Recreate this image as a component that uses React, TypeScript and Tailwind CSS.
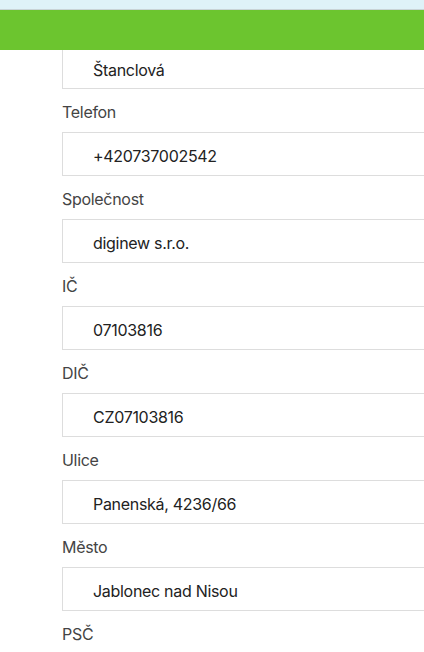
import React from "react";

const fields: { label: string; value: string }[] = [
  { label: "Telefon", value: "+420737002542" },
  { label: "Společnost", value: "diginew s.r.o." },
  { label: "IČ", value: "07103816" },
  { label: "DIČ", value: "CZ07103816" },
  { label: "Ulice", value: "Panenská, 4236/66" },
  { label: "Město", value: "Jablonec nad Nisou" },
];

export default function App() {
  return (
    <div
      className="w-[424px] h-[652px] overflow-hidden bg-white relative tracking-[-0.3px]"
      style={{ fontFamily: "Inter, 'Liberation Sans', sans-serif" }}
    >
      <div className="h-[10px] bg-[#dff2f8] border-b border-[#c9d3d6]" />
      <div className="h-[40px] bg-[#6cc52f]" />
      <div className="pl-[62px] -mr-[40px]">
        <div className="h-[39px] border-l border-b border-[#dddddd] flex items-center pl-[30px] pt-[1px] text-[16px] text-[#222]">
          Štanclová
        </div>
        {fields.map((f) => (
          <div key={f.label}>
            <div className="h-[43px] flex items-center pt-[2px] text-[16px] text-[#444]">{f.label}</div>
            <div className="h-[44px] border border-[#dddddd] flex items-center pl-[30px] pt-[3px] text-[16px] text-[#222]">
              {f.value}
            </div>
          </div>
        ))}
        <div className="h-[43px] flex items-center pt-[2px] text-[16px] text-[#444]">PSČ</div>
      </div>
    </div>
  );
}
